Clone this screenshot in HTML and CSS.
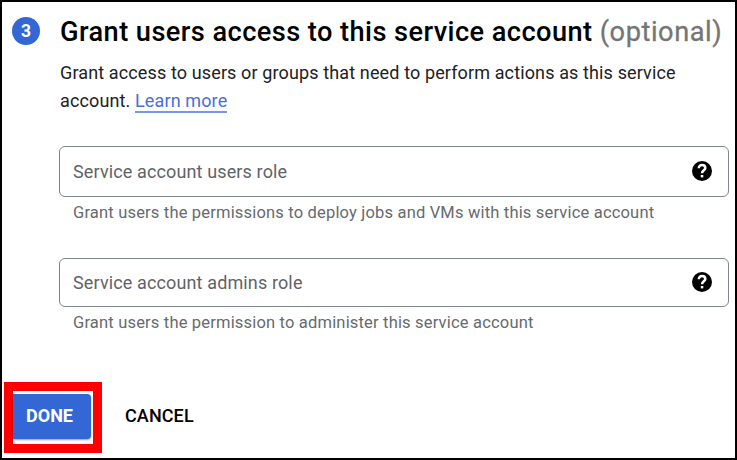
FILE: index.html
```html
<!DOCTYPE html>
<html lang="en">
<head>
<meta charset="utf-8">
<title>Create service account</title>
<link rel="stylesheet" href="styles.css">
</head>
<body>
<main class="panel">
  <section class="step">
    <span class="step-number">3</span>
    <div class="step-content">
      <h1 class="title">Grant users access to this service account <span class="optional">(optional)</span></h1>
      <p class="description">Grant access to users or groups that need to perform actions as this service<br>account. <a class="link" href="#">Learn more</a></p>
      <div class="field">
        <div class="input input-users"><span class="label">Service account users role</span>
          <svg class="help" viewBox="2 2 20 20"><circle cx="12" cy="12" r="10"/><path class="mark" d="M8.800 9.300C8.800 7.200 10.200 6.100 12 6.100s3.300 1.100 3.300 2.900c0 2.300-3.200 2.400-3.200 5.200"/><path class="dot" d="M10.800 16h2.500v2.400h-2.500z"/></svg>
        </div>
        <div class="hint">Grant users the permissions to deploy jobs and VMs with this service account</div>
      </div>
      <div class="field">
        <div class="input input-admins"><span class="label">Service account admins role</span>
          <svg class="help help-admins" viewBox="2 2 20 20"><circle cx="12" cy="12" r="10"/><path class="mark" d="M8.800 9.300C8.800 7.200 10.200 6.100 12 6.100s3.300 1.100 3.300 2.900c0 2.300-3.200 2.400-3.200 5.200"/><path class="dot" d="M10.800 16h2.500v2.400h-2.500z"/></svg>
        </div>
        <div class="hint">Grant users the permission to administer this service account</div>
      </div>
    </div>
  </section>
  <div class="actions">
    <div class="highlight"><button class="button done">DONE</button></div>
    <button class="button cancel">CANCEL</button>
  </div>
</main>
</body>
</html>
```

FILE: styles.css
```css
* { box-sizing: border-box; }
body { margin: 0; background: #fff; font-family: Roboto, sans-serif; color: #202124; }
.panel { width: 737px; height: 460px; border: 2px solid #000; overflow: hidden; padding: 12px 0 0 2px; }
.step { display: flex; height: 354px; }
.step-number { flex: none; width: 28px; height: 28px; margin: 3px 0 0 8px; border-radius: 50%; background: #3367d6; color: #fff; font-size: 17.5px; font-weight: 700; line-height: 28px; text-align: center; }
.step-content { margin-left: 19px; width: 670px; }
.title { margin: 0; padding: 1px 0 0 1px; height: 35px; font-size: 27.2px; letter-spacing: .43px; line-height: 34px; font-weight: 500; color: #000; white-space: nowrap; }
.optional { font-weight: 400; color: #757575; letter-spacing: .55px; -webkit-text-stroke: .3px #757575; }
.description { margin: 10px 0 31px; padding-left: 1px; font-size: 18px; letter-spacing: .125px; line-height: 28px; white-space: nowrap; }
.link { color: #4a6edb; text-decoration: none; border-bottom: 2px solid #7796e5; }
.field { height: 112px; }
.input { border: 1px solid #80868b; border-radius: 6px; display: flex; align-items: center; justify-content: space-between; padding: 0 16px 0 13px; }
.input-users { height: 51px; }
.input-admins { height: 49px; }
.label { font-size: 18px; letter-spacing: .13px; color: #5f6368; }
.help { width: 20px; height: 20px; margin-bottom: 1px; fill: #000; }
.mark { fill: none; stroke: #fff; stroke-width: 2.5; }
.dot { fill: #fff; }
.hint { margin: 6px 0 0 14px; font-size: 16.5px; letter-spacing: .18px; line-height: 20px; color: #666a6e; white-space: nowrap; }
.actions { display: flex; align-items: center; margin-top: 14px; }
.highlight { width: 98px; height: 71px; border: 9px solid #f00; padding-top: 3px; }
.button { display: block; border: 0; background: none; padding: 0; font: 500 18px Roboto, sans-serif; white-space: nowrap; }
.done { width: 78px; height: 45px; padding: 0 5px 3px 0; border-radius: 0 4px 4px 0; background: #3367d6; color: #fff; font-weight: 700; box-shadow: 0 1px 2px #0006; }
.cancel { margin: -5px 0 0 23px; letter-spacing: .1px; color: #000; }
```
